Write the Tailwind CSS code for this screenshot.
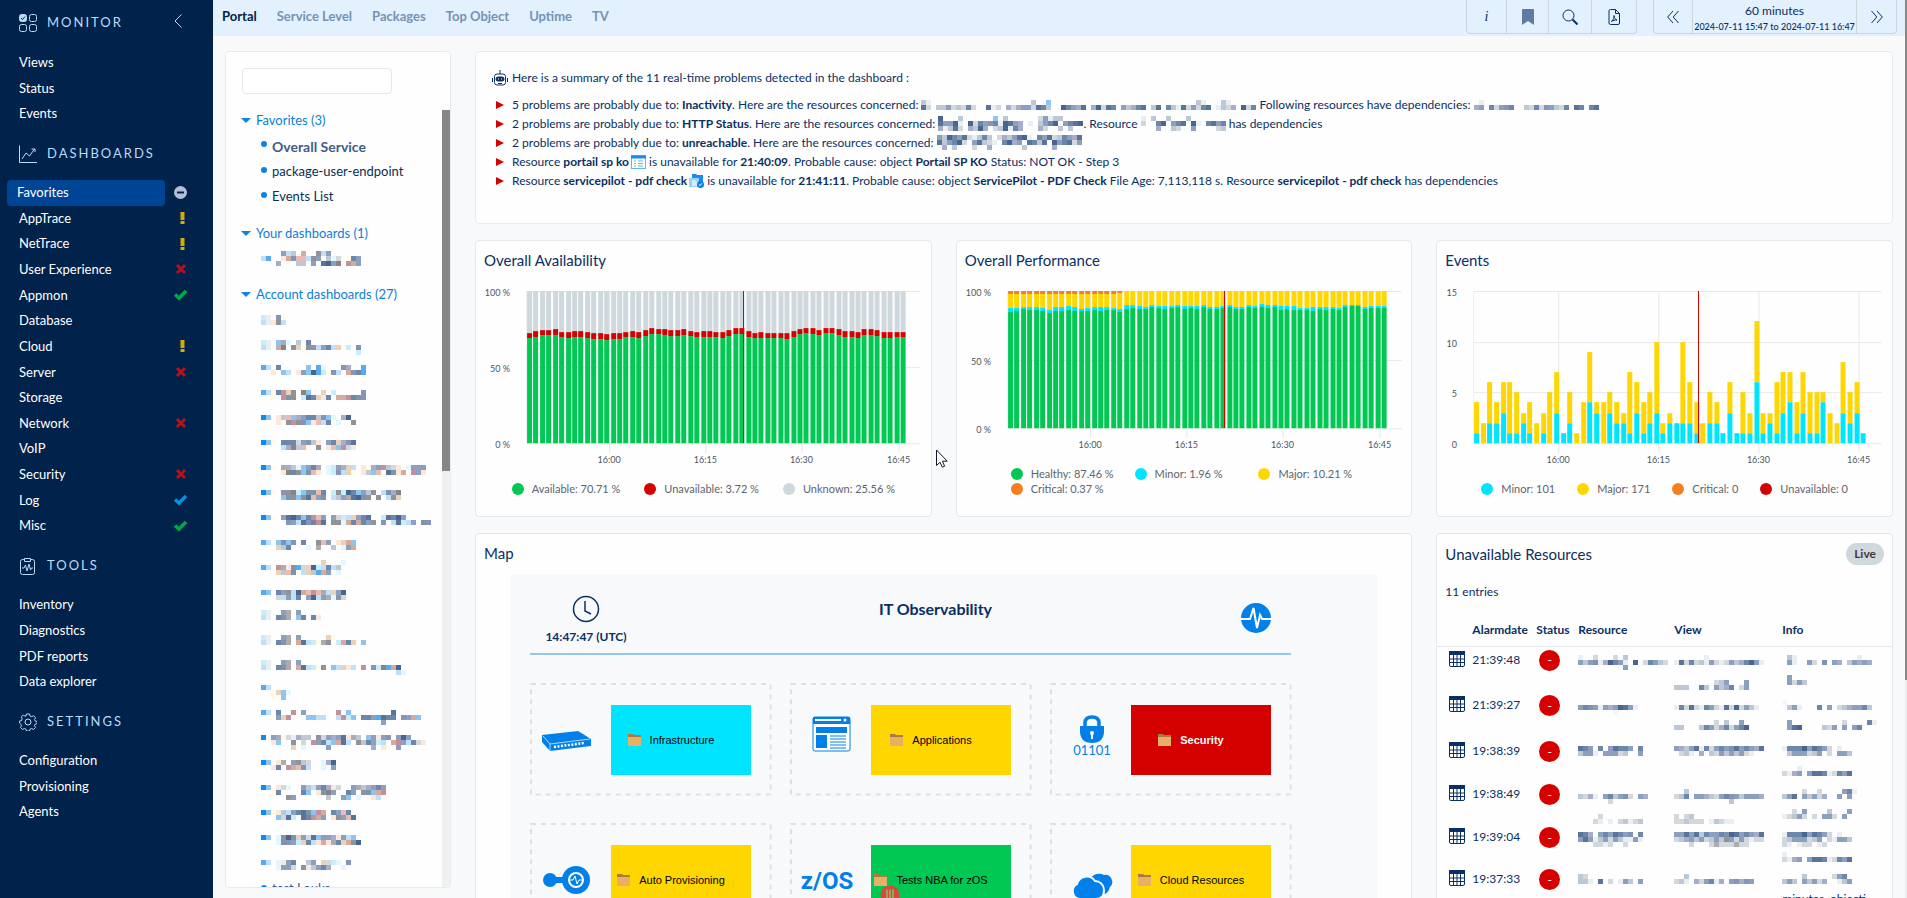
<!DOCTYPE html>
<html lang="en">
<head>
    <meta charset="UTF-8">
    <meta name="viewport" content="width=device-width, initial-scale=1.0">
    <title>Portal - Overall Service</title>
    <script src="https://cdn.jsdelivr.net/npm/@tailwindcss/browser@4"></script>
</head>
<body class="flex h-screen overflow-hidden bg-[#f8f9fb] font-['Lato','Noto_Sans',sans-serif] text-[#0a2f62]">

    <!-- Sidebar -->
    <nav class="w-[213px] shrink-0 bg-[#00224b] text-[13px] text-white">
        <div class="flex h-[49px] items-center pb-1 pl-[19px] pr-[31px] text-[#b9dcf8]">
            <svg class="h-[18px] w-[18px]" viewBox="0 0 18 18" fill="none" stroke="currentColor"><rect x=".5" y=".5" width="7" height="7" rx="2" fill="currentColor"/><rect x="10.500" y=".5" width="7" height="7" rx="2"/><rect x=".5" y="10.500" width="7" height="7" rx="2"/><rect x="10.500" y="10.500" width="7" height="7" rx="2"/><path d="M2 4l1.500 1.500L6 2.500" stroke="#00224b"/></svg>
            <h2 class="ml-2.5 text-[13px] tracking-[2px]">MONITOR</h2>
            <button class="ml-auto pb-1" aria-label="Collapse menu"><svg class="h-3.5 w-2" viewBox="0 0 8 14" fill="none" stroke="currentColor"><path d="M7.500 .5L1 7l6.500 6.500"/></svg></button>
        </div>
        <ul class="grid h-[78px] auto-rows-fr items-center pl-[19px] pt-px">
            <li><a href="#">Views</a></li>
            <li><a href="#">Status</a></li>
            <li><a href="#">Events</a></li>
        </ul>

        <div class="flex h-[53px] items-center pl-[19px] text-[#b9dcf8]">
            <svg class="h-[18px] w-[18px]" viewBox="0 0 18 18" fill="none" stroke="currentColor"><path d="M.5 .5v17H18M3 14l4-6 3.500 3 5-7M12.500 4h3.500v3"/></svg>
            <h2 class="ml-2.5 text-[13px] tracking-[2px]">DASHBOARDS</h2>
        </div>
        <ul id="dashboards" class="grid h-[359px] auto-rows-fr items-center pr-[26px]"></ul>

        <div class="flex h-[53px] items-center pl-[19px] text-[#b9dcf8]">
            <svg class="h-[18px] w-[18px]" viewBox="0 0 18 18" fill="none" stroke="currentColor"><rect x="1.500" y="2.500" width="14" height="15" rx="2"/><path d="M5.500 4.500v-3h6v3z" fill="#00224b"/><path d="M3 11h2l1.500-3L8 14l2-7 1.500 6 1-2H14"/></svg>
            <h2 class="ml-2.5 text-[13px] tracking-[2px]">TOOLS</h2>
        </div>
        <ul class="grid h-[103px] auto-rows-fr items-center pl-[19px]">
            <li><a href="#">Inventory</a></li>
            <li><a href="#">Diagnostics</a></li>
            <li><a href="#">PDF reports</a></li>
            <li><a href="#">Data explorer</a></li>
        </ul>

        <div class="flex h-[53px] items-center pl-[19px] text-[#b9dcf8]">
            <svg class="h-[18px] w-[18px]" viewBox="0 0 18 18" fill="none" stroke="currentColor"><circle cx="9" cy="9" r="3"/><path d="M7.500 1h3l.5 2 1.700.7 1.800-1 2 2-1 1.800.7 1.600 2 .4v2l-2 .6-.7 1.600 1 1.800-2 2-1.800-1-1.700.7-.5 1.800h-3l-.5-1.800-1.700-.7-1.800 1-2-2 1-1.800-.7-1.600L.6 10V8l2-.5.6-1.600-1-1.800 2-2 1.800 1L7 3z"/></svg>
            <h2 class="ml-2.5 text-[13px] tracking-[2px]">SETTINGS</h2>
        </div>
        <ul class="grid h-[77px] auto-rows-fr items-center pl-[19px]">
            <li><a href="#">Configuration</a></li>
            <li><a href="#">Provisioning</a></li>
            <li><a href="#">Agents</a></li>
        </ul>
    </nav>

    <div class="flex min-w-0 flex-1 flex-col">
        <!-- Top bar -->
        <header class="flex h-9 shrink-0 items-start justify-between bg-[#e3f0fd] pl-[9px] pr-2">
            <div class="flex gap-5 pt-1.5 text-[13px] font-bold leading-5 text-[#7593b4]">
                <a href="#" class="text-[#00224b]">Portal</a>
                <a href="#">Service Level</a>
                <a href="#">Packages</a>
                <a href="#">Top Object</a>
                <a href="#">Uptime</a>
                <a href="#">TV</a>
            </div>
            <div class="flex h-[34px] gap-4 text-[#0a2f62]">
                <div class="flex divide-x divide-[#cdd5dc] rounded-b border border-t-0 border-[#cdd5dc]">
                    <button class="w-10 font-['Liberation_Serif',serif] text-sm italic">i</button>
                    <button class="flex w-[42px] items-center justify-center" aria-label="Bookmark"><svg class="h-4 w-3" viewBox="0 0 12 16"><path d="M0 1q0-1 1-1h10q1 0 1 1v15l-6-4-6 4z" fill="#5f7ba5"/></svg></button>
                    <button class="flex w-[43px] items-center justify-center" aria-label="Search"><svg class="h-4 w-4" viewBox="0 0 16 16" fill="none" stroke="currentColor"><circle cx="6.500" cy="6.500" r="5.500"/><path d="M10.500 10.500l5 5" stroke-width="2"/></svg></button>
                    <button class="flex w-11 items-center justify-center" aria-label="PDF"><svg class="h-4 w-3" viewBox="0 0 12 16" fill="none" stroke="currentColor"><path d="M1 2q0-1.500 1.500-1.500H7.500L11.500 4.500V14q0 1.500-1.500 1.500H2.500Q1 15.500 1 14zM7.500 .5v4h4M3.500 12.500c2-2 3-4 2.500-6 0 2.500 1.500 4 3 4.500-2-.3-4 .5-5.500 1.500z"/></svg></button>
                </div>
                <div class="flex divide-x divide-[#cdd5dc] rounded-b border border-t-0 border-[#cdd5dc]">
                    <button class="flex w-[39px] items-center justify-center" aria-label="Previous"><svg class="h-3 w-3" viewBox="0 0 12 12" fill="none" stroke="currentColor"><path d="M6 0L.7 6 6 12M11.500 0L6.200 6l5.300 6"/></svg></button>
                    <button class="w-[164px] text-center">
                        <span class="block text-xs leading-5">60 minutes</span>
                        <span class="block text-[9px] font-medium leading-3">2024-07-11 15:47 to 2024-07-11 16:47</span>
                    </button>
                    <button class="flex w-[39px] items-center justify-center" aria-label="Next"><svg class="h-3 w-3" viewBox="0 0 12 12" fill="none" stroke="currentColor"><path d="M.5 0l5.300 6L.5 12M6 0l5.300 6L6 12"/></svg></button>
                </div>
            </div>
        </header>

        <div class="flex min-h-0 flex-1 gap-6 pl-3 pr-3 pt-[15px]">
            <!-- Dashboard tree -->
            <aside class="mb-[10px] flex w-[226px] shrink-0 flex-col overflow-hidden rounded border border-[#e8ebee] bg-[#fefefe]">
                <input type="text" aria-label="Search dashboards" class="ml-4 mt-4 h-[26px] w-[150px] shrink-0 rounded border border-[#e4e7ea] bg-white px-2 text-[13px]">
                <div class="mt-4 flex min-h-0 flex-1">
                    <div class="min-w-0 flex-1 overflow-hidden pl-[15px] text-[13px] text-[#0a2f52]">
                        <button class="flex h-[22px] items-center gap-[5px] text-[#0a7fd9]"><svg class="h-1.5 w-2.5" viewBox="0 0 10 6"><path d="M0 0h10L5 5z" fill="#0a84e8"/></svg>Favorites (3)</button>
                        <ul class="mb-3 mt-0.5">
                            <li class="flex h-[25px] items-center gap-[5px] pl-5 text-sm font-bold text-[#3f5c8d]"><span class="mb-1.5 h-1.5 w-1.5 rounded-full bg-[#0a84e8]"></span>Overall Service</li>
                            <li class="flex h-[25px] items-center gap-[5px] pl-5"><span class="mb-1 h-1.5 w-1.5 rounded-full bg-[#0a84e8]"></span>package-user-endpoint</li>
                            <li class="flex h-[25px] items-center gap-[5px] pl-5"><span class="mb-1 h-1.5 w-1.5 rounded-full bg-[#0a84e8]"></span>Events List</li>
                        </ul>
                        <button class="flex h-[26px] items-center gap-[5px] text-[#0a7fd9]"><svg class="h-1.5 w-2.5" viewBox="0 0 10 6"><path d="M0 0h10L5 5z" fill="#0a84e8"/></svg>Your dashboards (1)</button>
                        <div class="h-9 pl-5 pt-1"><svg data-mosaic="....vel.w..kev.../ec..owiqqekvrlfm.rgv/...j...ll.v.hsvx.pwv"></svg></div>
                        <button class="flex h-[24px] items-center gap-[5px] text-[#0a7fd9]"><svg class="h-1.5 w-2.5" viewBox="0 0 10 6"><path d="M0 0h10L5 5z" fill="#0a84e8"/></svg>Account dashboards (27)</button>
                        <ul id="accountDashboards" class="pl-5"></ul>
                    </div>
                    <div class="w-2 shrink-0 bg-[#eff1f1]"><div class="h-[361px] bg-[#878787]"></div></div>
                </div>
            </aside>

            <main class="grid min-w-0 flex-1 auto-rows-max grid-cols-3 content-start gap-x-6 gap-y-4">
                <!-- Problem summary -->
                <section class="col-span-3 h-[173px] rounded border border-[#e8ebee] bg-[#fefefe] px-4 pt-4 text-xs">
                    <p class="flex h-5 items-center gap-1">
                        <svg class="h-4 w-4" viewBox="0 0 16 16" fill="none" stroke="#0a2f62"><path d="M8 0v4"/><rect x="2.500" y="4" width="11" height="11" rx="2.500"/><rect x="4" y="7" width="8" height="4" rx="2" fill="#0a2f62"/><path d="M.5 8v4M15.500 8v4M6 13.500h4"/><path d="M6 9h1M9 9h1" stroke="#fff"/></svg>
                        Here is a summary of the 11 real-time problems detected in the dashboard :
                    </p>
                    <ul class="mt-[7px] [&_li]:flex [&_li]:h-[19px] [&_li]:items-center [&_li]:whitespace-pre">
                        <li><svg class="ml-1 mr-2 h-2 w-2" viewBox="0 0 8 8"><path d="M0 0l8 4-8 4z" fill="#d60000"/></svg>5 problems are probably due to: <b>Inactivity</b>. Here are the resources concerned: <svg data-mosaic="lz....................l..d.............................lz...lz/hm.llvmlmgm..hzm.jmjvvmhgl..sgvjh.jsmhg.vljgh.lh.glzhmvmgh.zlmj.smg"></svg> Following resources have dependencies: <svg data-mosaic=".z......................./jv.gmvig..lmgmivlmg.hg.gh"></svg></li>
                        <li><svg class="ml-1 mr-2 h-2 w-2" viewBox="0 0 8 8"><path d="M0 0l8 4-8 4z" fill="#d60000"/></svg>2 problems are probably due to: <b>HTTP Status</b>. Here are the resources concerned: <svg data-mosaic="s...l......d.l......mvzll/hvvsz.smgvigzshvj.z.lvgs.vghs/jzlhm.jlsj.mlszgj...jm..l.l"></svg>. Resource <svg data-mosaic="z.l..l...l......./m..gs.vgh.sz.ghvg/...j..lm..v....ml"></svg> has dependencies</li>
                        <li><svg class="ml-1 mr-2 h-2 w-2" viewBox="0 0 8 8"><path d="M0 0l8 4-8 4z" fill="#d60000"/></svg>2 problems are probably due to: <b>unreachable</b>. Here are the resources concerned: <svg data-mosaic="vlsgvhmzlgl.mjlvhsz.gvhmlgvjh/hlvgsm.vhlmz.gsjv.hglh.svghmv/.j.l...m..j......l.....j"></svg></li>
                        <li><svg class="ml-1 mr-2 h-2 w-2" viewBox="0 0 8 8"><path d="M0 0l8 4-8 4z" fill="#d60000"/></svg>Resource <b>portail sp ko</b> <svg class="ml-0.5 h-[14px] w-[15px]" viewBox="0 0 15 14" fill="none" stroke="#5fb4f5"><rect x=".5" y=".5" width="14" height="13"/><path d="M0 2h15" stroke="#1a8ef0" stroke-width="3"/><path d="M3 6h2M7 6h5M3 8.500h2M7 8.500h5M3 11h2M7 11h5"/></svg> is unavailable for <b>21:40:09</b>. Probable cause: object <b>Portail SP KO</b> Status: NOT OK - Step 3</li>
                        <li><svg class="ml-1 mr-2 h-2 w-2" viewBox="0 0 8 8"><path d="M0 0l8 4-8 4z" fill="#d60000"/></svg>Resource <b>servicepilot - pdf check</b> <svg class="ml-0.5 h-[14px] w-[15px]" viewBox="0 0 15 14"><path d="M3 0h4l1 1h6v8H3z" fill="#1a8ef0"/><path d="M0 4h10v9H0z" fill="#9bd0f8"/><path d="M3 6h3l2 2v4H3z" fill="#d5ecfd"/><circle cx="11.500" cy="10.500" r="3.500" fill="#0a7fe0"/><path d="M9.800 10.500l1.200 1.200 2-2.400" fill="none" stroke="#fff"/></svg> is unavailable for <b>21:41:11</b>. Probable cause: object <b>ServicePilot - PDF Check</b> File Age: 7,113,118 s. Resource <b>servicepilot - pdf check</b> has dependencies</li>
                    </ul>
                </section>

                <!-- Charts -->
                <section class="h-[277px] rounded border border-[#e4e9ed] bg-[#fefefe]">
                    <h3 class="h-10 px-2 pt-[9px] text-[15px] leading-5">Overall Availability</h3>
                    <svg id="availability" class="w-full" viewBox="0 0 454 190"></svg>
                    <div class="mt-2.5 flex justify-center gap-6 text-[11px] leading-4 text-[#5b6470]">
                        <span class="flex items-center gap-2"><i class="h-3 w-3 rounded-full bg-[#00c853]"></i>Available: 70.71 %</span>
                        <span class="flex items-center gap-2"><i class="h-3 w-3 rounded-full bg-[#d50000]"></i>Unavailable: 3.72 %</span>
                        <span class="flex items-center gap-2"><i class="h-3 w-3 rounded-full bg-[#cfd8dc]"></i>Unknown: 25.56 %</span>
                    </div>
                </section>
                <section class="h-[277px] rounded border border-[#e4e9ed] bg-[#fefefe]">
                    <h3 class="h-10 px-2 pt-[9px] text-[15px] leading-5">Overall Performance</h3>
                    <svg id="performance" class="w-full" viewBox="0 0 454 175"></svg>
                    <div class="mt-2.5 grid grid-cols-3 pl-[54px] pr-[29px] text-[11px] leading-[15px] text-[#5b6470]">
                        <span class="flex items-center gap-2"><i class="h-3 w-3 rounded-full bg-[#00c853]"></i>Healthy: 87.46 %</span>
                        <span class="flex items-center gap-2"><i class="h-3 w-3 rounded-full bg-[#00e5ff]"></i>Minor: 1.96 %</span>
                        <span class="flex items-center gap-2"><i class="h-3 w-3 rounded-full bg-[#ffd600]"></i>Major: 10.21 %</span>
                        <span class="flex items-center gap-2"><i class="h-3 w-3 rounded-full bg-[#f57f20]"></i>Critical: 0.37 %</span>
                    </div>
                </section>
                <section class="h-[277px] rounded border border-[#e4e9ed] bg-[#fefefe]">
                    <h3 class="h-10 px-2 pt-[9px] text-[15px] leading-5">Events</h3>
                    <svg id="events" class="w-full" viewBox="0 0 454 190"></svg>
                    <div class="mt-2.5 flex justify-center gap-[22px] text-[11px] leading-4 text-[#5b6470]">
                        <span class="flex items-center gap-2"><i class="h-3 w-3 rounded-full bg-[#00e5ff]"></i>Minor: 101</span>
                        <span class="flex items-center gap-2"><i class="h-3 w-3 rounded-full bg-[#ffd600]"></i>Major: 171</span>
                        <span class="flex items-center gap-2"><i class="h-3 w-3 rounded-full bg-[#f57f20]"></i>Critical: 0</span>
                        <span class="flex items-center gap-2"><i class="h-3 w-3 rounded-full bg-[#d50000]"></i>Unavailable: 0</span>
                    </div>
                </section>

                <!-- Map -->
                <section class="col-span-2 rounded border border-[#e4e9ed] bg-[#fefefe]">
                    <h3 class="h-10 px-2 pt-[9px] text-[15px] leading-5">Map</h3>
                    <div class="ml-[35px] mr-[34px] bg-[#f8f9fb] pb-6 pl-[19px] pr-5">
                        <div class="grid max-w-[761px] grid-cols-3 border-b-2 border-[#92c7f2] pb-2 pt-[21px]">
                            <div class="w-28 text-center text-xs font-bold">
                                <svg class="mx-auto mb-1.5 h-7 w-7" viewBox="0 0 28 28" fill="none" stroke="#0a2f62" stroke-width="1.500"><circle cx="14" cy="14" r="12.500"/><path d="M13 6v10l6 3"/></svg>
                                14:47:47 (UTC)
                            </div>
                            <h4 class="pl-[50px] pt-0.5 text-center text-base font-bold leading-6">IT Observability</h4>
                            <svg class="mr-5 mt-2 h-[30px] w-[30px] justify-self-end" viewBox="0 0 30 30"><circle cx="15" cy="15" r="15" fill="#0080e8"/><path d="M0 16h9l3.500-11L16 25l3-13 2 4h9" fill="none" stroke="#fff" stroke-width="2"/></svg>
                        </div>
                        <div id="map" class="mt-7 grid max-w-[762px] grid-cols-3 gap-x-[18px] gap-y-[26px]"></div>
                    </div>
                </section>

                <!-- Unavailable resources -->
                <section class="rounded border border-[#e4e9ed] bg-[#fefefe]">
                    <div class="flex h-10 items-center justify-between px-2">
                        <h3 class="text-[15px] leading-5">Unavailable Resources</h3>
                        <span class="rounded-full bg-[#cfd8dc] px-2 py-[3px] text-xs font-bold leading-4 text-[#4a3540]">Live</span>
                    </div>
                    <p class="px-2 pt-2.5 text-xs leading-4">11 entries</p>
                    <table class="mt-[15px] w-full table-fixed text-left text-xs">
                        <thead>
                            <tr class="h-[31px] border-b border-[#e4e9ed]">
                                <th class="w-[35px]"></th>
                                <th class="w-16">Alarmdate</th>
                                <th class="w-[42px]">Status</th>
                                <th class="w-24">Resource</th>
                                <th class="w-[108px]">View</th>
                                <th>Info</th>
                            </tr>
                        </thead>
                        <tbody id="alarms"></tbody>
                    </table>
                </section>
            </main>
        </div>
    </div>

    <!-- Page scrollbar -->
    <div class="w-0.5 shrink-0 bg-[#eceeef]"><div class="h-[680px] bg-[#878787]"></div></div>

    <!-- Pointer -->
    <svg class="pointer-events-none absolute left-[936px] top-[449px] h-[19px] w-3" viewBox="0 0 12 19"><path d="M.5 1v15.500l3.500-3.300 2.300 5 2.300-1-2.200-5h4.800z" fill="#fff" stroke="#111827"/></svg>

    <script>
        // Sidebar dashboards with their state
        const states = {
            none: '',
            minus: '<svg class="h-[13px] w-[13px]" viewBox="0 0 13 13"><circle cx="6.500" cy="6.500" r="6.500" fill="#b3bfd3"/><path d="M3 6.500h7" stroke="#00224b" stroke-width="2"/></svg>',
            warn: '<svg class="h-[13px] w-[13px]" viewBox="0 0 13 13"><path d="M6.500 0h4v8h-4zM6.500 9h4v3h-4z" fill="#d6ac00"/></svg>',
            ko: '<svg class="h-[13px] w-[13px]" viewBox="0 0 13 13"><path d="M3 2l8 8M11 2l-8 8" stroke="#b5121b" stroke-width="3"/></svg>',
            ok: '<svg class="h-[13px] w-[13px]" viewBox="0 0 13 13"><path d="M1 5.500L5 9l7-7" fill="none" stroke="#00a84a" stroke-width="3.500"/></svg>',
            info: '<svg class="h-[13px] w-[13px]" viewBox="0 0 13 13"><path d="M1 5.500L5 9l7-7" fill="none" stroke="#0095e0" stroke-width="3.500"/></svg>'
        };
        const dashboards = [
            ['Favorites', 'minus'], ['AppTrace', 'warn'], ['NetTrace', 'warn'], ['User Experience', 'ko'], ['Appmon', 'ok'],
            ['Database', 'none'], ['Cloud', 'warn'], ['Server', 'ko'], ['Storage', 'none'], ['Network', 'ko'],
            ['VoIP', 'none'], ['Security', 'ko'], ['Log', 'info'], ['Misc', 'ok']
        ];
        document.getElementById('dashboards').innerHTML = dashboards.map(([name, state], i) => `
            <li class="flex items-center justify-between">
                <a href="#" class="${i ? 'pl-[19px]' : 'ml-[7px] flex h-[26px] w-[158px] items-center rounded bg-[#004595] pl-2.5'}">${name}</a>
                ${states[state]}
            </li>`).join('');

        // Masked names, one character per 5px block, rows separated by "/"
        const palette = {
            b: '#0f8af0', c: '#55aaf0', d: '#8cc5f2', e: '#bfe0fa', f: '#e2f8fe', g: '#6d87ab', h: '#5a7499', i: '#8893b8',
            j: '#a5adca', k: '#909297', l: '#bcc8d5', m: '#d3d8dc', n: '#e8d2ba', o: '#fbe8da', p: '#c2929c', q: '#e8bcb2',
            r: '#fffbe8', s: '#48658f', t: '#7c95ad', u: '#c8eefc', v: '#8ba0bf', w: '#d4ab9c', x: '#878583', y: '#afaab0', z: '#e9eef3', F: '#f4f6f9'
        };
        function drawMosaic(svg) {
            const rows = svg.dataset.mosaic.split('/');
            const cols = Math.max(...rows.map(r => r.length));
            svg.setAttribute('width', cols * 5);
            svg.setAttribute('height', rows.length * 5);
            svg.setAttribute('aria-hidden', 'true');
            svg.innerHTML = rows.map((row, y) => [...row].map((c, x) =>
                palette[c] ? `<rect x="${x * 5}" y="${y * 5}" width="5" height="5" fill="${palette[c]}"/>` : '').join('')).join('');
        }

        const accountRows = [
            '/uz.ir/ezoke',
            '/uz.dyf.l.g/ez.wx.kn.kievgenru.t/...................u',
            '/ce.g.....d.cf...ij..c/..o.de.ovdscurie.wigc',
            '/cergpnk.xd..n.u.....i/..r.ptk.uhgnog.wwpgti',
            '/bd.olqdjvgglidf.js/...orkpkidoqeg.f..k',
            '/bdr.gggmvilo.vgnjih/....ejxlqr.k.oqdpmo',
            '/bdr.yjlfdvgy.fuvjne.orjvplmo.fvvv/....oxgkdtqo.fuienr.oldq.htow.pvo',
            '/bdr.ikxudttqg.ukusgdvlk.etjx/....dtkdthqvt.elvyhstk.k.ekn',
            '/bdr.vhsgdgpqv.vmuenvgh..uhgsv/.....ivehigph.kkfwgwgvk.i.ehuev.ti',
            '/ce.dtdi.g..kqv.onwd/...nlg...f.y..l.fvw',
            '............n...f/ce.pyokcmnsuegel/...nlqt.enlcwv.f',
            '/cd.gvkeswqpqyenvs/...meveg.vsevyfim',
            'uz..vy.v/ez.gty.dg.go',
            'uz..vy.v.....nr/ez.gty.wheuryk.uwgn.d',
            'uz..vy.v/ez.gty.wheurk.denoe.p.iuxcws/...........................ef',
            'ce/..rndf/..r.d',
            'ce.g..p.v......p.d........h/...vnp...ddee..epud.ggvchgg.ivwd./........................v',
            'b.vyrmzjll.kmvjvhoyl.dvovi.vsv/..od..k.m.pvgedwhe.klgvue.wpvegmo/......n.f....v........j.or.v',
            'bd.oy.vklm..fjs/..og.pwqie..f.v',
            'bd.omf..vlevgjom..vyljvgv/..rg....gd.otxv..gv.ktdwp/.....kv......l..vd.f..oe',
            'bdrolevghtdpw.gvqg/...dmhu.hgpwv.okvqh',
            'bd.fkstnvmhdvvjoved/...ftivungeowoygnwks',
            'ce.fovg..lv.nmuf.i/...fvvm.kolvgj..f'
        ];
        document.getElementById('accountDashboards').innerHTML = accountRows.map(m =>
            `<li class="h-[25px] pt-[3px]"><svg data-mosaic="${m}"></svg></li>`).join('') +
            '<li class="flex items-center gap-[5px] leading-3 text-[#3f5c8d]"><span class="h-1.5 w-1.5 rounded-full bg-[#0a84e8]"></span>test Louka</li>';

        // Stacked bar charts, one bar per minute from 15:47
        const available = [105,106,108,108,108,106,105,106,106,105,104,104,103,104,104,106,106,105,107,109,109,108,107,107,108,107,106,106,106,106,105,107,109,109,106,105,105,105,105,105,104,106,109,110,109,108,110,110,108,106,106,105,108,108,107,105,105,106,106];
        const unavailable = [110,112,113,113,114,111,111,112,112,111,110,110,109,110,110,111,112,111,113,115,114,114,113,113,114,112,111,112,112,111,111,113,115,115,112,110,111,110,110,110,110,112,114,115,115,113,115,115,114,112,112,111,114,114,113,111,111,111,111];
        const healthy = [116,117,119,118,118,117,115,117,117,118,117,117,117,118,117,118,118,116,119,120,119,119,121,120,119,120,121,119,120,119,121,119,119,120,121,119,119,121,120,121,120,121,118,119,118,118,118,117,119,118,119,118,121,122,122,119,120,120,120];
        const minor = [4,3,2,3,3,3,3,4,4,4,4,2,3,3,4,3,2,3,4,3,3,2,2,2,3,2,2,3,2,3,2,2,2,2,2,2,2,2,2,3,3,2,4,3,4,2,2,4,2,3,2,2,2,1,1,2,2,2,2];
        const events = [[4,1],[2,0],[6,2],[4,2],[6,3],[6,1],[5,1],[3,2],[4,1],[2,0],[3,1],[5,0],[7,3],[1,1],[5,2],[1,0],[4,0],[9,4],[4,3],[4,0],[5,3],[4,2],[3,2],[7,1],[6,3],[4,1],[5,2],[10,3],[2,1],[3,2],[2,2],[10,2],[6,2],[4,1],[2,0],[5,2],[4,2],[1,1],[6,3],[1,1],[5,1],[3,1],[12,6],[3,1],[3,2],[6,1],[7,3],[7,4],[4,1],[7,3],[5,1],[5,1],[5,4],[3,0],[2,0],[8,3],[5,2],[6,3],[1,1]];

        function drawChart(id, o) {
            const top = 10, base = top + o.height;
            let s = '';
            o.labels.forEach((label, i) => {
                const y = Math.round(top + i * o.height / (o.labels.length - 1));
                s += `<rect x="${o.left}" y="${y}" width="${444 - o.left}" height="1" fill="#e6e8ea"/>`;
                s += `<text x="${o.labelX}" y="${y + 5}" text-anchor="end" class="fill-[#4b5563] text-[9px]">${label}</text>`;
            });
            s += `<rect x="${o.left - 1}" y="${top}" width="1" height="${o.height}" fill="#eef0f2"/>`;
            o.ticks.forEach((x, i) => {
                s += `<rect x="${x}" y="${top}" width="1" height="${o.height + 10}" fill="#e6e8ea"/>`;
                s += `<text x="${x}" y="${base + 20}" text-anchor="middle" class="fill-[#4b5563] text-[9px]">${['16:00', '16:15', '16:30', '16:45'][i]}</text>`;
            });
            o.bars.forEach((parts, i) => {
                const x = Math.round(o.left + i * o.step);
                let from = 0;
                parts.forEach(([to, color]) => {
                    if (to > from) s += `<rect x="${x}" y="${base - to}" width="5" height="${to - from}" fill="${color}"/>`;
                    from = Math.max(from, to);
                });
            });
            s += `<rect x="${o.now}" y="${top}" width="1" height="${o.height}" fill="#d50000" shape-rendering="crispEdges"/>`;
            document.getElementById(id).innerHTML = s;
        }
        drawChart('availability', {
            height: 152, left: 51, labelX: 34, step: 6.43, now: 267, ticks: [133, 229, 325, 422], labels: ['100 %', '50 %', '0 %'],
            bars: available.map((v, i) => [[v, '#00c853'], [unavailable[i], '#d50000'], [152, '#cfd8dc']])
        });
        drawChart('performance', {
            height: 137, left: 51, labelX: 34, step: 6.43, now: 267, ticks: [133, 229, 325, 422], labels: ['100 %', '50 %', '0 %'],
            bars: healthy.map((v, i) => [[v, '#00c853'], [v + minor[i], '#00e5ff'], [i < 17 ? 134 : i < 18 ? 135 : 137, '#ffd600'], [137, '#f57f20']])
        });
        drawChart('events', {
            height: 152, left: 37, labelX: 20, step: 6.66, now: 261, ticks: [121, 221, 321, 421], labels: ['15', '10', '5', '0'],
            bars: events.map(([all, low]) => [[Math.round(low * 10.13), '#00e5ff'], [Math.round(all * 10.13), '#ffd600']])
        });

        // Map tiles
        const tiles = [
            ['Infrastructure', 'bg-[#00e5ff] text-black', '<path d="M8 30l36-4 13 8v7l-41 5z" fill="#0080e8"/><path d="M8 30v7l8 9v-7z" fill="#0080e8"/><path d="M9 31l7 8 40-5M16 39v7" fill="none" stroke="#fff" stroke-width=".7"/><path d="M20 42l30-4" stroke="#fff" stroke-width="2.500" stroke-dasharray="2 1.500"/>'],
            ['Applications', 'bg-[#ffd600] text-black', '<rect x="19" y="12" width="37" height="34" rx="2" fill="#fff" stroke="#0080e8"/><path d="M19 12h37v7H19z" fill="#0080e8"/><path d="M21 14h26v2H21z" fill="#fff"/><circle cx="51" cy="15" r="1.500" fill="#fff"/><path d="M22 22h31v6H22zM22 30h11v13H22z" fill="#0080e8"/><path d="M36 31h16M36 34h16M36 37h16M36 40h16M36 43h16" stroke="#0080e8"/>'],
            ['Security', 'bg-[#d50000] font-bold text-white', '<path d="M31 22v-4q0-6 7-6t7 6v4" fill="none" stroke="#0080e8" stroke-width="3.500"/><path d="M26 21h24v5q0 12-12 12T26 26z" fill="#0080e8"/><circle cx="38" cy="28" r="2" fill="#fff"/><path d="M38 28v6" stroke="#fff" stroke-width="2"/><text x="38" y="50" text-anchor="middle" class="fill-[#0080e8] text-[13px]">01101</text>'],
            ['Auto Provisioning', 'bg-[#ffd600] text-black', '<circle cx="16" cy="35" r="7" fill="#0080e8"/><path d="M16 32h20v6H16z" fill="#0080e8"/><circle cx="42" cy="35" r="14" fill="#0080e8"/><circle cx="42" cy="35" r="7" fill="#0080e8" stroke="#fff" stroke-width="2"/><path d="M36 35h3l2-4 2 8 2-4h3" fill="none" stroke="#fff"/>'],
            ['Tests NBA for zOS', 'bg-[#00c853] text-black', '<text x="33" y="44" text-anchor="middle" font-family="Roboto, sans-serif" class="fill-[#0080e8] text-2xl font-bold">z/OS</text>'],
            ['Cloud Resources', 'bg-[#ffd600] text-black', '<path d="M34 40a11 11 0 0 1 16-10 7 7 0 0 1 6 12q-2 8-8 7H36z" fill="#0080e8"/><path d="M26 54a8 8 0 0 1-3-15 10 10 0 0 1 18-3 9 9 0 0 1 9 9q0 9-8 9z" fill="#0080e8" stroke="#f8f9fb" stroke-width="2"/>']
        ];
        document.getElementById('map').innerHTML = tiles.map(([name, look, icon], i) => `
            <div class="relative flex h-[114px] items-center justify-between pr-[21px]">
                <svg class="absolute inset-0 h-full w-full"><rect x="1" y="1" width="99%" height="97%" fill="none" stroke="#e2dde4" stroke-width="2" stroke-dasharray="5"/></svg>
                <svg class="relative ml-1 h-[70px] w-[66px]" viewBox="0 0 66 70">${icon}</svg>
                <a href="#" class="relative flex h-[70px] w-[140px] items-center justify-center gap-[9px] pr-5 font-['Liberation_Sans',sans-serif] text-[11px] ${look}">
                    <svg class="h-3 w-[13px] shrink-0" viewBox="0 0 13 12"><path d="M0 0h5l1 1h7v3H0z" fill="#a87b3f"/><path d="M0 3h13v9H0z" fill="#e8b066"/></svg>
                    <span class="whitespace-nowrap">${name}</span>
                    ${i === 4 ? '<svg class="absolute left-[9px] top-10 h-5 w-5" viewBox="0 0 20 20"><circle cx="10" cy="10" r="9.500" fill="#d8493c"/><path d="M7 4.500v11M10 4.500v11M13 4.500v11" stroke="#7ec46b" stroke-width="1.500"/></svg>' : ''}
                </a>
            </div>`).join('');

        // Alarm rows: time, row height, resource / view / info masks
        const alarms = [
            ['21:39:48', 'h-[46px]', 'z..m...m.l/vlvtzjsgvz.s.mgvlm/.........v', '......z/zhmgmlzvmzmvljgsvz////........mlv...v/lll..gl.vljg.mv', '.lz............z/.vz..vm.t.vj.lvjvj///.v/.vmvl'],
            ['21:39:27', 'h-[46px]', '/vgtvzvjvshvz/.......F', '/zgmhmzgvmzhmsmvlz///........m.l..v/ll...lgvmjgmvgs', 'F/.lvz...g.v.mljvvgl///.v..........m....gz/.vhs....lmv.v.vg'],
            ['19:38:39', 'h-[43px]', 'hgv.g.vhggv.g/lvvz.vvvml..v', 'vjlvhzgmvgvthvgvjh/.mlz.j.lmvlvlvmz', 'zgggsvhgvm.z./.lvvvmlv.m.vvl///...z/mzjv.vhhgzmgvh'],
            ['19:38:49', 'h-[42px]', '/lmjz.vglvtm.vj/......m///....m..../...mz.z.mlzml', '..l../mlg.vvjlmvgivlvvvj/...........l///m.ml/mmlmmm.zlmzz', '....m..m....vgz/lvh.vlvmj..v.v///..m.v....l...v/zmlvm.m.vvm.v'],
            ['19:39:04', 'h-[42px]', 'hgj.vgvhgvt.g/vhvzlvmvlzzvz/...mmzm..m', 'vvhvhlgvvgtshvgvjh/mljvlvmlvlkvmvmzmm/...m...mymmmymm', 'zgggsvhgvm.z./mlvvvmlv.mzvvl/mz.zmm.zm//z/mzjv.vhhgzmgvh'],
            ['19:37:33', 'h-[42px]', 'lm/llz.h.m.zvl.v', '..l../mlz.jmvgzj.vijiv', '....l.....mvg/lvl.vlvmj..zlv/']
        ];
        document.getElementById('alarms').innerHTML = alarms.map(([time, height, resource, view, info], i) => `
            <tr class="${height} align-top">
                <td class="pl-3 pt-1"><svg class="h-4 w-4" viewBox="0 0 16 16" fill="none" stroke="#0a2f62"><rect x=".5" y=".5" width="15" height="15" rx="1.500"/><path d="M0 2h16" stroke-width="4"/><path d="M1 8h14M1 11.500h14M4.500 4v11M8 4v11M11.500 4v11"/></svg></td>
                <td class="pt-[5px] leading-4">${time}</td>
                <td class="pl-[3px] pt-[3px]"><span class="flex h-[21px] w-[21px] items-center justify-center rounded-full bg-[#d60000] leading-5 text-white">-</span></td>
                <td class="pt-2"><svg data-mosaic="${resource}"></svg></td>
                <td class="pt-2"><svg data-mosaic="${view}"></svg></td>
                <td class="pt-2"><svg data-mosaic="${info}"></svg>${i === 5 ? '<span class="block pt-1 leading-3">minutes, objecti</span>' : ''}</td>
            </tr>`).join('');

        document.querySelectorAll('[data-mosaic]').forEach(drawMosaic);
    </script>
</body>
</html>
